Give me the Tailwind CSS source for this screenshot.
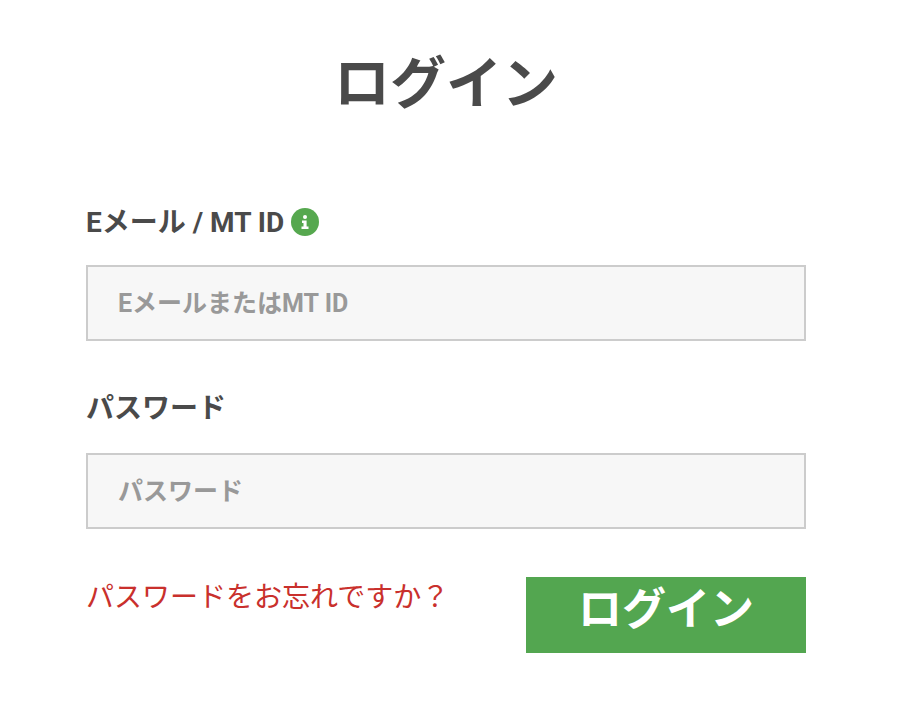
<!DOCTYPE html>
<html lang="ja">
  <head>
    <meta charset="UTF-8" />
    <meta name="viewport" content="width=device-width, initial-scale=1.0" />
    <title>ログイン</title>
    <script src="https://cdn.jsdelivr.net/npm/@tailwindcss/browser@4"></script>
  </head>
  <body class="bg-white text-[#4a4a4a] font-[Roboto,'Noto_Sans_CJK_JP',sans-serif]">
    <main class="pl-[86px] pr-24 pt-[42px] pb-[75px]">
      <h1 class="text-center text-[56px] leading-[84px] font-bold">ログイン</h1>

      <form class="pt-[77px]">
        <div class="flex items-center gap-[7px] h-10">
          <label for="email" class="text-[28px] leading-10 font-bold">Eメール / MT ID</label>
          <button type="button" aria-label="ヘルプ" class="pb-0.5 cursor-pointer">
            <svg class="size-7" viewBox="0 0 28 28">
              <circle cx="14" cy="14" r="14" fill="#56a84f" />
              <circle cx="14" cy="9" r="2" fill="#fff" />
              <path d="M11 12.500h4.600v6h1.900v2.500h-7v-2.500h2v-3.500H11z" fill="#fff" />
            </svg>
          </button>
        </div>
        <input
          type="text"
          id="email"
          placeholder="EメールまたはMT ID"
          class="block w-full h-19 mt-[22px] px-[30px] border-2 border-[#cccccc] bg-[#f7f7f7] text-[25px] font-bold placeholder:text-[#999999]"
        />

        <label for="password" class="block mt-12 text-[28px] leading-10 font-bold">パスワード</label>
        <input
          type="password"
          id="password"
          placeholder="パスワード"
          class="block w-full h-19 mt-6 px-[30px] border-2 border-[#cccccc] bg-[#f7f7f7] text-[25px] font-bold placeholder:text-[#999999]"
        />

        <div class="flex items-start justify-between mt-12">
          <a href="#" class="text-[28px] leading-[42px] text-[#c9302c]">パスワードをお忘れですか？</a>
          <button type="submit" class="w-70 h-19 pb-2.5 bg-[#53a650] text-white text-[44px] leading-16 font-bold cursor-pointer">ログイン</button>
        </div>
      </form>
    </main>
  </body>
</html>
